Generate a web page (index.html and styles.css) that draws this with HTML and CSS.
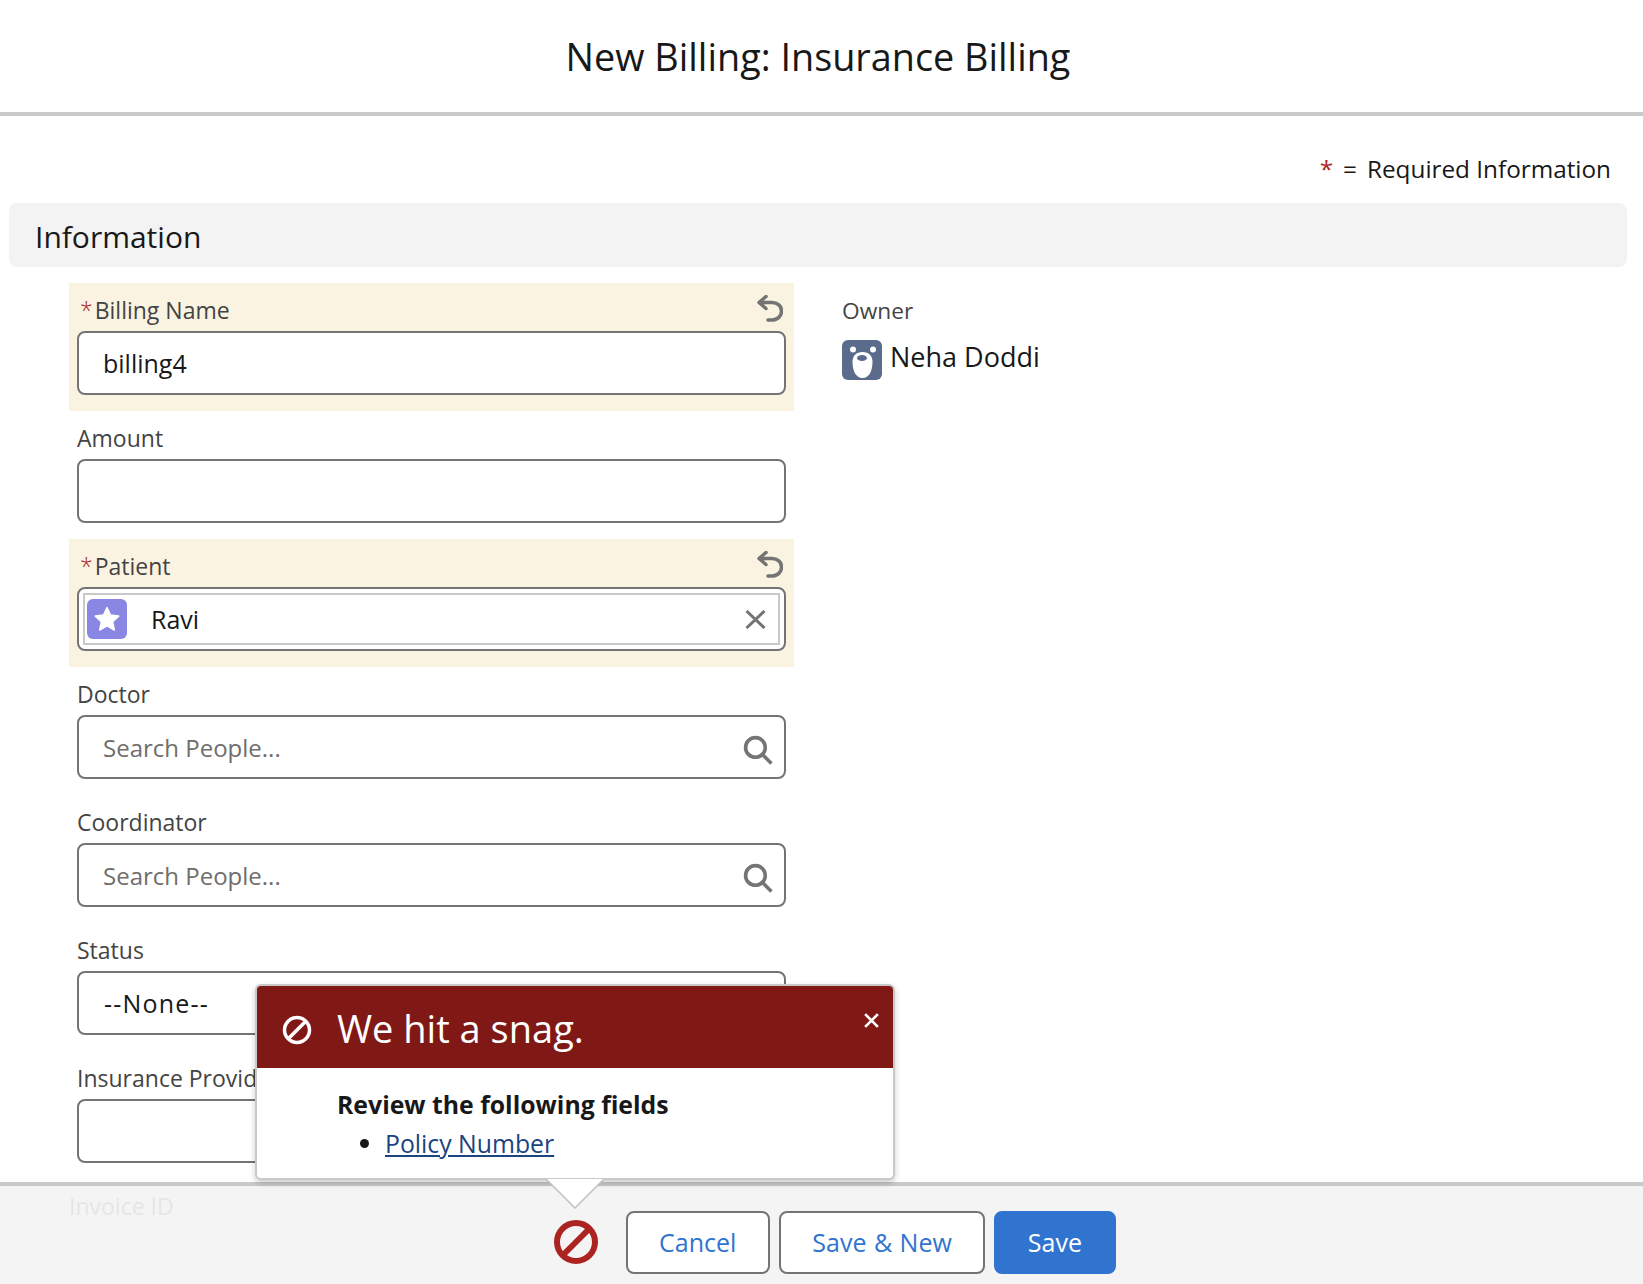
FILE: index.html
```html
<!DOCTYPE html>
<html>
<head>
	<meta charset="utf-8">
	<title>New Billing: Insurance Billing</title>
	<link rel="stylesheet" href="styles.css">
</head>
<body>
	<div class="page">
		<h1 class="title">New Billing: Insurance Billing</h1>

		<p class="required"><span class="star req-star">*</span><span class="req-eq">=</span>Required Information</p>
		<h2 class="section">Information</h2>

		<div class="columns">
			<div class="col-left">
				<div class="field changed">
					<div class="label-row">
						<label><span class="star">*</span>Billing Name</label>
						<svg class="undo" viewBox="0 0 26 27"><path d="M9 1.500 2 7.500l7 6M2.500 7.500H15c5.500 0 9.500 3.500 9.500 8.500s-4 9-9.500 9h-4"/></svg>
					</div>
					<div class="input">billing4</div>
				</div>

				<div class="field">
					<div class="label-row"><label>Amount</label></div>
					<div class="input"></div>
				</div>

				<div class="field changed">
					<div class="label-row">
						<label><span class="star">*</span>Patient</label>
						<svg class="undo" viewBox="0 0 26 27"><path d="M9 1.500 2 7.500l7 6M2.500 7.500H15c5.500 0 9.500 3.500 9.500 8.500s-4 9-9.500 9h-4"/></svg>
					</div>
					<div class="input input-pill">
						<div class="pill">
							<span class="tile">
								<svg viewBox="0 0 40 40"><path fill="#fff" d="M20 8.500l3.500 7.600 8.200 1-6 5.700 1.600 8.200-7.300-4.100-7.300 4.100 1.600-8.200-6-5.700 8.200-1z" stroke="#fff" stroke-width="1.500" stroke-linejoin="round"/></svg>
							</span>
							<span class="pill-name">Ravi</span>
							<svg class="clear" viewBox="0 0 21 19"><path d="M1.500 1l18 17M19.500 1l-18 17"/></svg>
						</div>
					</div>
				</div>

				<div class="field">
					<div class="label-row"><label>Doctor</label></div>
					<div class="input placeholder">Search People...
						<svg class="search" viewBox="0 0 29 29"><circle cx="12" cy="12" r="9.500"/><path d="M19 19l8.500 8.500"/></svg>
					</div>
				</div>

				<div class="field">
					<div class="label-row"><label>Coordinator</label></div>
					<div class="input placeholder">Search People...
						<svg class="search" viewBox="0 0 29 29"><circle cx="12" cy="12" r="9.500"/><path d="M19 19l8.500 8.500"/></svg>
					</div>
				</div>

				<div class="field">
					<div class="label-row"><label>Status</label></div>
					<div class="input none-value">--None--</div>
				</div>

				<div class="field">
					<div class="label-row"><label>Insurance Provider</label></div>
					<div class="input"></div>
				</div>

				<div class="field field-faded">
					<div class="label-row"><label>Invoice ID</label></div>
				</div>
			</div>

			<div class="col-right">
				<div class="owner-label">Owner</div>
				<div class="owner">
					<span class="avatar">
						<svg viewBox="0 0 40 40">
							<circle cx="11" cy="9.500" r="3" fill="#fff"/>
							<circle cx="31" cy="9.500" r="3" fill="#fff"/>
							<path fill="#fff" d="M20.500 12c6.500 0 10 4 10 10 0 9-3.500 16-10 16s-10-7-10-16c0-6 3.500-10 10-10z"/>
							<ellipse cx="20" cy="18" rx="5" ry="3" fill="#5a6b8c"/>
						</svg>
					</span>
					<span class="owner-name">Neha Doddi</span>
				</div>
			</div>
		</div>

		<div class="footer">
			<svg class="error-icon" viewBox="0 0 44 44"><circle cx="22" cy="22" r="19" /><path d="M35 9 9 35"/></svg>
			<button class="btn">Cancel</button>
			<button class="btn">Save &amp; New</button>
			<button class="btn btn-primary">Save</button>
		</div>

		<div class="popover">
			<div class="pop-head">
				<svg class="pop-icon" viewBox="0 0 30 30"><circle cx="15" cy="15" r="12.500"/><path d="M23.500 6.500l-17 17"/></svg>
				<span class="pop-title">We hit a snag.</span>
				<svg class="pop-close" viewBox="0 0 16 16"><path d="M2 2l12 12M14 2 2 14"/></svg>
			</div>
			<div class="pop-body">
				<div class="pop-sub">Review the following fields</div>
				<ul class="pop-list"><li><a href="#">Policy Number</a></li></ul>
			</div>
			<svg class="pop-nub" viewBox="0 0 58 30"><path d="M0 0 29 29 58 0" fill="#fff" stroke="#c0c0c0" stroke-width="1.500"/></svg>
		</div>
	</div>
</body>
</html>
```

FILE: styles.css
```css
* {
	margin: 0;
	padding: 0;
	box-sizing: border-box;
}

body {
	font-family: "Open Sans", "Noto Sans", sans-serif;
	color: #181818;
	background: #fff;
}

.page {
	position: relative;
	height: 1284px;
	overflow: hidden;
}

.title {
	height: 116px;
	padding-right: 7px;
	border-bottom: 4px solid #c9c9c9;
	font-size: 37.800px;
	font-weight: 400;
	line-height: 114px;
	text-align: center;
}

.required {
	margin-top: 35px;
	padding-right: 32px;
	font-size: 24.300px;
	line-height: 36px;
	text-align: right;
}

.req-star {
	margin-right: 10px;
}

.req-eq {
	margin-right: 10px;
}

.star {
	color: #ab2421;
}

.section {
	margin: 16px 16px 0 9px;
	height: 64px;
	padding: 2px 0 0 26px;
	background: #f3f3f3;
	border-radius: 8px;
	font-size: 30px;
	font-weight: 400;
	line-height: 64px;
}

.columns {
	display: flex;
	margin-top: 16px;
	padding-left: 69px;
}

.col-left {
	width: 725px;
}

.col-right {
	margin-left: 48px;
	padding-top: 12px;
}

.field {
	height: 128px;
	padding: 0 8px;
}

.field-faded {
	padding: 0;
}

.changed {
	background: #faf3e1;
}

.label-row {
	display: flex;
	justify-content: space-between;
	align-items: center;
	height: 48px;
	padding-top: 6px;
	color: #444;
	font-size: 23px;
}

.label-row .star {
	margin: 0 2px 0 3px;
	font-weight: 300;
}

.undo {
	width: 26px;
	height: 27px;
	margin-right: 3px;
	margin-top: -3px;
	fill: none;
	stroke: #747474;
	stroke-width: 3.500;
	stroke-linecap: round;
	stroke-linejoin: round;
}

.input {
	display: flex;
	justify-content: space-between;
	align-items: center;
	height: 64px;
	padding: 0 12px 0 24px;
	background: #fff;
	border: 2px solid #747474;
	border-radius: 8px;
	font-size: 25px;
}

.placeholder {
	color: #706e6b;
	font-size: 24px;
}

.none-value {
	padding-left: 25px;
	letter-spacing: 1.200px;
}

.search {
	width: 30px;
	height: 30px;
	margin-top: 5px;
	margin-right: -1px;
	fill: none;
	stroke: #747474;
	stroke-width: 3.500;
}

.input-pill {
	padding: 4px;
}

.pill {
	display: flex;
	align-items: center;
	width: 100%;
	height: 52px;
	padding: 0 12px 0 2px;
	border: 2px solid #c9c9c9;
}

.tile {
	width: 40px;
	height: 40px;
	background: #8a86e3;
	border-radius: 6px;
}

.tile svg,
.avatar svg {
	display: block;
}

.pill-name {
	flex: 1;
	margin-left: 24px;
}

.clear {
	width: 21px;
	height: 19px;
	fill: none;
	stroke: #747474;
	stroke-width: 3;
}

.owner-label {
	color: #444;
	font-size: 22.700px;
	line-height: 32px;
}

.owner {
	display: flex;
	align-items: flex-start;
	margin-top: 13px;
}

.avatar {
	width: 40px;
	height: 40px;
	background: #5a6b8c;
	border-radius: 6px;
}

.owner-name {
	margin-left: 8px;
	font-size: 27px;
	line-height: 34px;
}

.footer {
	position: absolute;
	left: 0;
	right: 0;
	bottom: 0;
	display: flex;
	justify-content: center;
	align-items: center;
	gap: 9px;
	height: 102px;
	padding: 14px 0 0 26px;
	background: rgba(243, 243, 243, 0.92);
	border-top: 4px solid #c9c9c9;
}

.error-icon {
	width: 44px;
	height: 44px;
	margin-right: 19px;
	fill: none;
	stroke: #ab2421;
	stroke-width: 6;
}

.btn {
	height: 63px;
	padding: 0 31.500px;
	background: #fff;
	border: 2px solid #747474;
	border-radius: 8px;
	color: #3074d0;
	font-family: inherit;
	font-size: 25px;
	word-spacing: 1px;
}

.btn-primary {
	background: #3074d0;
	border-color: #3074d0;
	color: #fff;
}

.popover {
	position: absolute;
	left: 255px;
	top: 984px;
	width: 640px;
	height: 196px;
	background: #fff;
	border: 2px solid #c9c9c9;
	border-radius: 6px;
	box-shadow: 0 3px 6px rgba(0, 0, 0, 0.2);
}

.pop-head {
	display: flex;
	align-items: center;
	height: 82px;
	padding-left: 25px;
	background: #801916;
	color: #fff;
	border-radius: 4px 4px 0 0;
}

.pop-icon {
	width: 30px;
	height: 30px;
	margin-top: 6px;
	fill: none;
	stroke: #fff;
	stroke-width: 3.500;
}

.pop-title {
	margin-left: 25px;
	padding-top: 2px;
	font-size: 38px;
}

.pop-close {
	position: absolute;
	right: 13px;
	top: 26px;
	width: 17px;
	height: 17px;
	fill: none;
	stroke: #fff;
	stroke-width: 2.500;
}

.pop-body {
	padding: 18px 0 0 80px;
	font-size: 24.800px;
}

.pop-sub {
	font-weight: 700;
	line-height: 36px;
}

.pop-list {
	margin-top: 3px;
	padding-left: 48px;
	line-height: 36px;
}

.pop-list a {
	color: #1b4480;
}

.pop-nub {
	position: absolute;
	left: 289px;
	top: 193px;
	width: 58px;
	height: 30px;
}
```
